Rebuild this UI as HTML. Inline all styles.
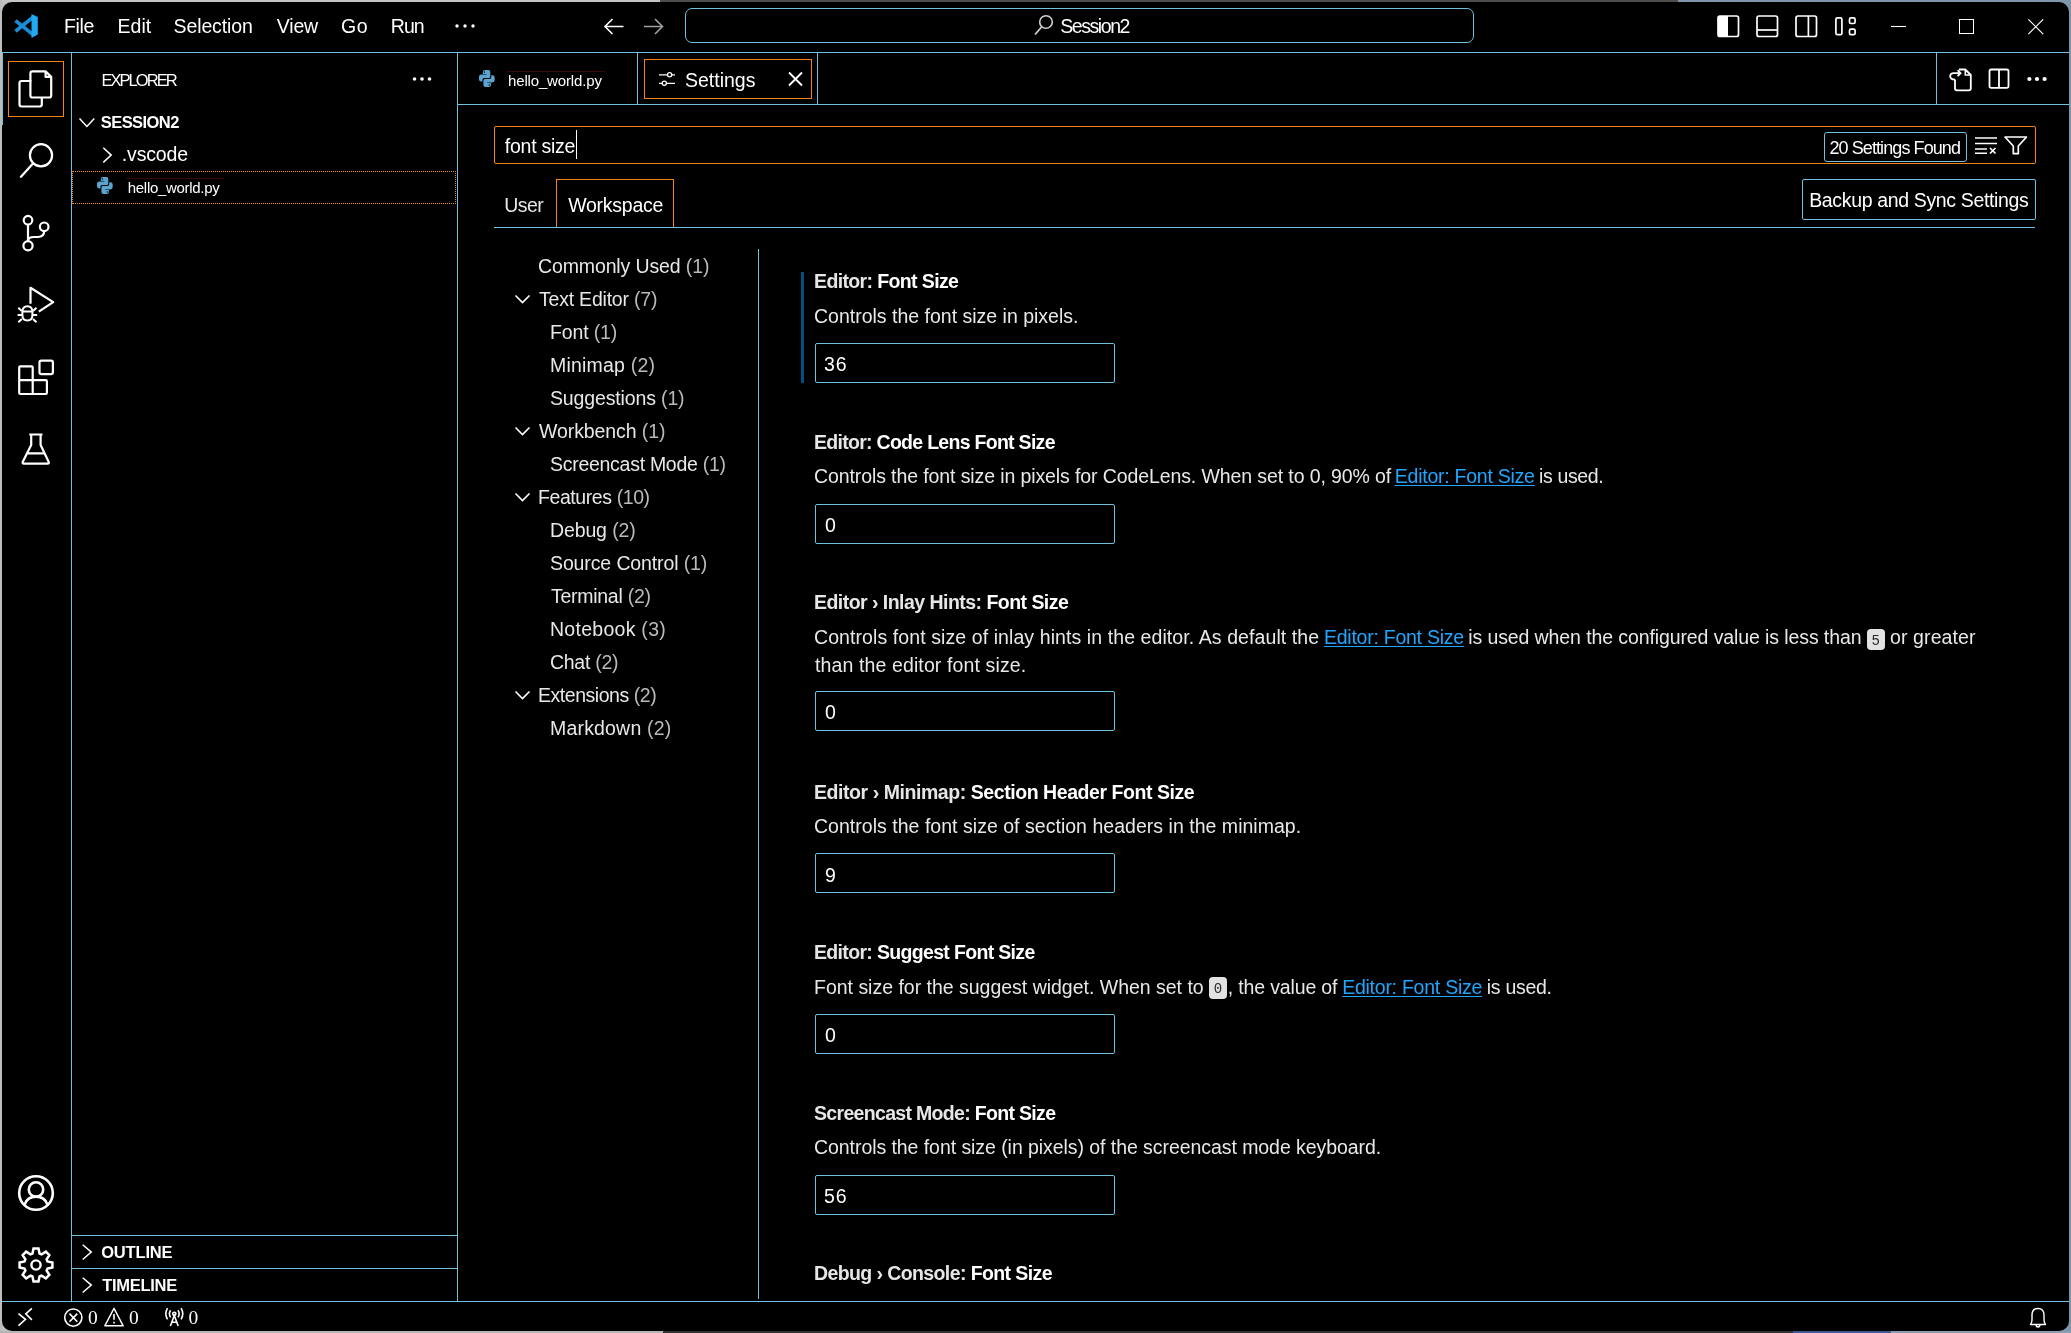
<!DOCTYPE html>
<html><head><meta charset="utf-8"><style>
html,body{margin:0;padding:0;}
body{width:2071px;height:1333px;position:relative;overflow:hidden;background:linear-gradient(90deg,#c0c0c0 0,#c0c0c0 1035px,#7f96ab 1035px);font-family:"Liberation Sans",sans-serif;}
.strip{position:absolute;}
#win{position:absolute;left:2px;top:2px;width:2067px;height:1329px;background:#000;border-radius:10px;overflow:hidden;}
.abs{position:absolute;}
.t{position:absolute;white-space:nowrap;}
.ic{position:absolute;overflow:visible;}
.hl{position:absolute;height:1px;background:#6fc3df;}
.vl{position:absolute;width:1px;background:#6fc3df;}
.lk{color:#21a6ff;text-decoration:underline;text-underline-offset:1.5px;}
.cd{display:inline-block;background:#dcdcdc;color:#111;font-family:"Liberation Mono",monospace;font-size:14.5px;line-height:15px;padding:3px 4px 3px 4px;margin:0 1px;border-radius:4px;position:relative;top:-0.5px;vertical-align:top;}
.cdb{position:absolute;background:#e2e2e2;color:#2a2a2a;font-family:"Liberation Mono",monospace;font-size:14px;line-height:25px;text-align:center;border-radius:4px;overflow:hidden;}
.inp{position:absolute;left:815px;width:298px;height:38px;border:1px solid #6fc3df;border-radius:2px;}
</style></head><body>
<div class="strip" style="left:0;top:0;width:660px;height:2px;background:#c4c4c4"></div>
<div class="strip" style="left:0;top:0;width:2px;height:1333px;background:#bdbdbd"></div>
<div class="strip" style="left:660px;top:0;width:1018px;height:2px;background:#4d4d4d"></div>
<div class="strip" style="left:1678px;top:0;width:393px;height:2px;background:#7f96ab"></div>
<div class="strip" style="left:2069px;top:0;width:2px;height:1333px;background:#7d94a8"></div>
<div class="strip" style="left:0;top:1331px;width:663px;height:2px;background:#b5b5b5"></div>
<div class="strip" style="left:663px;top:1331px;width:1130px;height:2px;background:#333"></div>
<div class="strip" style="left:1793px;top:1331px;width:98px;height:2px;background:#3a5a90"></div>
<div class="strip" style="left:1891px;top:1331px;width:180px;height:2px;background:#8a9cb0"></div>
<div id="win"></div>
<div id="content" style="position:absolute;left:0;top:0;width:2071px;height:1333px;will-change:transform;">

<div class="hl" style="left:2px;top:52px;width:2067px"></div>
<div class="vl" style="left:71px;top:52px;height:1249px"></div>
<div class="vl" style="left:457px;top:52px;height:1249px"></div>
<div class="hl" style="left:457px;top:104px;width:1612px"></div>
<div class="vl" style="left:637px;top:52px;height:52px"></div>
<div class="vl" style="left:817px;top:52px;height:52px"></div>
<div class="vl" style="left:1936px;top:52px;height:52px"></div>
<div class="hl" style="left:2px;top:1301px;width:2067px"></div>
<div class="hl" style="left:72px;top:1235px;width:385px"></div>
<div class="hl" style="left:72px;top:1268px;width:385px"></div>
<div class="hl" style="left:494px;top:227px;width:1541px"></div>
<div class="vl" style="left:758px;top:249px;height:1050px"></div>
<div class="abs" style="left:2px;top:52px;width:1px;height:73px;background:#6fc3df"></div>
<div class="abs" style="left:8px;top:61px;width:54px;height:54px;border:1px solid #f38518"></div>
<div class="abs" style="left:72px;top:171px;width:382px;height:31px;border:1px dotted #f38518"></div>
<div class="abs" style="left:644px;top:59px;width:166px;height:38px;border:1px solid #f38518"></div>
<div class="abs" style="left:685px;top:8px;width:787px;height:33px;border:1px solid #6fc3df;border-radius:7px"></div>
<div class="abs" style="left:494px;top:126px;width:1540px;height:36px;border:1px solid #f38518;border-radius:2px"></div>
<div class="abs" style="left:1824px;top:132px;width:141px;height:28px;border:1px solid #6fc3df;border-radius:3px"></div>
<div class="abs" style="left:556px;top:179px;width:116px;height:47px;border:1px solid #f38518;border-bottom:none"></div>
<div class="abs" style="left:1802px;top:179px;width:232px;height:39px;border:1px solid #6fc3df;border-radius:2px"></div>
<div class="abs" style="left:576px;top:130px;width:1px;height:29px;background:#fff"></div>
<div class="abs" style="left:801px;top:272px;width:3px;height:111px;background:#005080"></div>

<div id="t1" class="t" style="left:64.0px;top:17.39px;font-size:19.50px;line-height:19.50px;font-weight:400;color:#fff;font-family:'Liberation Sans',sans-serif;letter-spacing:-0.333px;">File</div>
<div id="t2" class="t" style="left:117.6px;top:17.39px;font-size:19.50px;line-height:19.50px;font-weight:400;color:#fff;font-family:'Liberation Sans',sans-serif;letter-spacing:-0.001px;">Edit</div>
<div id="t3" class="t" style="left:173.6px;top:17.39px;font-size:19.50px;line-height:19.50px;font-weight:400;color:#fff;font-family:'Liberation Sans',sans-serif;letter-spacing:-0.125px;">Selection</div>
<div id="t4" class="t" style="left:276.8px;top:17.39px;font-size:19.50px;line-height:19.50px;font-weight:400;color:#fff;font-family:'Liberation Sans',sans-serif;letter-spacing:-0.168px;">View</div>
<div id="t5" class="t" style="left:341.0px;top:17.39px;font-size:19.50px;line-height:19.50px;font-weight:400;color:#fff;font-family:'Liberation Sans',sans-serif;letter-spacing:0.500px;">Go</div>
<div id="t6" class="t" style="left:390.8px;top:17.39px;font-size:19.50px;line-height:19.50px;font-weight:400;color:#fff;font-family:'Liberation Sans',sans-serif;letter-spacing:-1.000px;">Run</div>
<div id="t7" class="t" style="left:1060.2px;top:16.59px;font-size:19.50px;line-height:19.50px;font-weight:400;color:#fff;font-family:'Liberation Sans',sans-serif;letter-spacing:-1.429px;">Session2</div>
<div id="t8" class="t" style="left:101.4px;top:71.83px;font-size:16.50px;line-height:16.50px;font-weight:400;color:#fff;font-family:'Liberation Sans',sans-serif;letter-spacing:-1.928px;">EXPLORER</div>
<div id="t9" class="t" style="left:100.8px;top:113.73px;font-size:16.50px;line-height:16.50px;font-weight:700;color:#fff;font-family:'Liberation Sans',sans-serif;letter-spacing:-0.570px;">SESSION2</div>
<div id="t10" class="t" style="left:121.8px;top:145.09px;font-size:19.50px;line-height:19.50px;font-weight:400;color:#fff;font-family:'Liberation Sans',sans-serif;letter-spacing:-0.166px;">.vscode</div>
<div id="t11" class="t" style="left:127.8px;top:180.00px;font-size:15.00px;line-height:15.00px;font-weight:400;color:#fff;font-family:'Liberation Sans',sans-serif;letter-spacing:-0.309px;">hello_world.py</div>
<div id="t12" class="t" style="left:101.2px;top:1244.43px;font-size:16.50px;line-height:16.50px;font-weight:700;color:#fff;font-family:'Liberation Sans',sans-serif;letter-spacing:-0.166px;">OUTLINE</div>
<div id="t13" class="t" style="left:102.2px;top:1276.93px;font-size:16.50px;line-height:16.50px;font-weight:700;color:#fff;font-family:'Liberation Sans',sans-serif;letter-spacing:-0.286px;">TIMELINE</div>
<div id="t14" class="t" style="left:508.0px;top:72.70px;font-size:15.00px;line-height:15.00px;font-weight:400;color:#fff;font-family:'Liberation Sans',sans-serif;letter-spacing:-0.153px;">hello_world.py</div>
<div id="t15" class="t" style="left:685.0px;top:71.09px;font-size:19.50px;line-height:19.50px;font-weight:400;color:#fff;font-family:'Liberation Sans',sans-serif;letter-spacing:0.001px;">Settings</div>
<div id="t16" class="t" style="left:504.8px;top:136.69px;font-size:19.50px;line-height:19.50px;font-weight:400;color:#fff;font-family:'Liberation Sans',sans-serif;letter-spacing:-0.250px;">font size</div>
<div id="t17" class="t" style="left:1829.4px;top:139.46px;font-size:18.00px;line-height:18.00px;font-weight:400;color:#fff;font-family:'Liberation Sans',sans-serif;letter-spacing:-0.907px;">20 Settings Found</div>
<div id="t18" class="t" style="left:504.2px;top:195.79px;font-size:19.50px;line-height:19.50px;font-weight:400;color:#e6e6e6;font-family:'Liberation Sans',sans-serif;letter-spacing:-0.501px;">User</div>
<div id="t19" class="t" style="left:568.2px;top:195.79px;font-size:19.50px;line-height:19.50px;font-weight:400;color:#fff;font-family:'Liberation Sans',sans-serif;letter-spacing:-0.250px;">Workspace</div>
<div id="t20" class="t" style="left:1809.2px;top:191.29px;font-size:19.50px;line-height:19.50px;font-weight:400;color:#fff;font-family:'Liberation Sans',sans-serif;letter-spacing:-0.348px;">Backup and Sync Settings</div>
<div id="t21" class="t" style="left:538.0px;top:257.19px;font-size:19.50px;line-height:19.50px;font-weight:400;color:#e8e8e8;font-family:'Liberation Sans',sans-serif;letter-spacing:-0.125px;">Commonly Used <span style="color:#bababa">(1)</span></div>
<div id="t22" class="t" style="left:539.0px;top:290.19px;font-size:19.50px;line-height:19.50px;font-weight:400;color:#e8e8e8;font-family:'Liberation Sans',sans-serif;letter-spacing:-0.214px;">Text Editor <span style="color:#bababa">(7)</span></div>
<svg class="ic" style="left:514px;top:293px" width="18" height="12" viewBox="0 0 18 12"><path d="M1.5 2.5 L8.5 9.5 L15.5 2.5" fill="none" stroke="#fff" stroke-width="1.6"/></svg>
<div id="t23" class="t" style="left:550.0px;top:323.19px;font-size:19.50px;line-height:19.50px;font-weight:400;color:#e8e8e8;font-family:'Liberation Sans',sans-serif;letter-spacing:-0.143px;">Font <span style="color:#bababa">(1)</span></div>
<div id="t24" class="t" style="left:550.0px;top:356.19px;font-size:19.50px;line-height:19.50px;font-weight:400;color:#e8e8e8;font-family:'Liberation Sans',sans-serif;letter-spacing:0.200px;">Minimap <span style="color:#bababa">(2)</span></div>
<div id="t25" class="t" style="left:550.0px;top:389.19px;font-size:19.50px;line-height:19.50px;font-weight:400;color:#e8e8e8;font-family:'Liberation Sans',sans-serif;letter-spacing:-0.143px;">Suggestions <span style="color:#bababa">(1)</span></div>
<div id="t26" class="t" style="left:539.0px;top:422.19px;font-size:19.50px;line-height:19.50px;font-weight:400;color:#e8e8e8;font-family:'Liberation Sans',sans-serif;letter-spacing:-0.083px;">Workbench <span style="color:#bababa">(1)</span></div>
<svg class="ic" style="left:514px;top:425px" width="18" height="12" viewBox="0 0 18 12"><path d="M1.5 2.5 L8.5 9.5 L15.5 2.5" fill="none" stroke="#fff" stroke-width="1.6"/></svg>
<div id="t27" class="t" style="left:550.0px;top:455.19px;font-size:19.50px;line-height:19.50px;font-weight:400;color:#e8e8e8;font-family:'Liberation Sans',sans-serif;letter-spacing:-0.278px;">Screencast Mode <span style="color:#bababa">(1)</span></div>
<div id="t28" class="t" style="left:538.0px;top:488.19px;font-size:19.50px;line-height:19.50px;font-weight:400;color:#e8e8e8;font-family:'Liberation Sans',sans-serif;letter-spacing:-0.417px;">Features <span style="color:#bababa">(10)</span></div>
<svg class="ic" style="left:514px;top:491px" width="18" height="12" viewBox="0 0 18 12"><path d="M1.5 2.5 L8.5 9.5 L15.5 2.5" fill="none" stroke="#fff" stroke-width="1.6"/></svg>
<div id="t29" class="t" style="left:550.0px;top:521.19px;font-size:19.50px;line-height:19.50px;font-weight:400;color:#e8e8e8;font-family:'Liberation Sans',sans-serif;letter-spacing:-0.125px;">Debug <span style="color:#bababa">(2)</span></div>
<div id="t30" class="t" style="left:550.0px;top:554.19px;font-size:19.50px;line-height:19.50px;font-weight:400;color:#e8e8e8;font-family:'Liberation Sans',sans-serif;letter-spacing:-0.118px;">Source Control <span style="color:#bababa">(1)</span></div>
<div id="t31" class="t" style="left:551.0px;top:587.19px;font-size:19.50px;line-height:19.50px;font-weight:400;color:#e8e8e8;font-family:'Liberation Sans',sans-serif;letter-spacing:-0.273px;">Terminal <span style="color:#bababa">(2)</span></div>
<div id="t32" class="t" style="left:550.0px;top:620.19px;font-size:19.50px;line-height:19.50px;font-weight:400;color:#e8e8e8;font-family:'Liberation Sans',sans-serif;letter-spacing:0.273px;">Notebook <span style="color:#bababa">(3)</span></div>
<div id="t33" class="t" style="left:550.0px;top:653.19px;font-size:19.50px;line-height:19.50px;font-weight:400;color:#e8e8e8;font-family:'Liberation Sans',sans-serif;letter-spacing:-0.286px;">Chat <span style="color:#bababa">(2)</span></div>
<div id="t34" class="t" style="left:538.0px;top:686.19px;font-size:19.50px;line-height:19.50px;font-weight:400;color:#e8e8e8;font-family:'Liberation Sans',sans-serif;letter-spacing:-0.462px;">Extensions <span style="color:#bababa">(2)</span></div>
<svg class="ic" style="left:514px;top:689px" width="18" height="12" viewBox="0 0 18 12"><path d="M1.5 2.5 L8.5 9.5 L15.5 2.5" fill="none" stroke="#fff" stroke-width="1.6"/></svg>
<div id="t35" class="t" style="left:550.0px;top:719.19px;font-size:19.50px;line-height:19.50px;font-weight:400;color:#e8e8e8;font-family:'Liberation Sans',sans-serif;letter-spacing:0.182px;">Markdown <span style="color:#bababa">(2)</span></div>
<div id="t36" class="t" style="left:814.0px;top:272.29px;font-size:19.50px;line-height:19.50px;font-weight:700;color:#fff;font-family:'Liberation Sans',sans-serif;letter-spacing:-0.625px;"><span style="color:#e6e6e6">Editor: </span>Font Size</div>
<div id="t37" class="t" style="left:814.0px;top:306.69px;font-size:19.50px;line-height:19.50px;font-weight:400;color:#e8e8e8;font-family:'Liberation Sans',sans-serif;letter-spacing:0.000px;">Controls the font size in pixels.</div>
<div class="inp" style="top:343.0px"></div>
<div id="t38" class="t" style="left:824.0px;top:355.39px;font-size:19.50px;line-height:19.50px;font-weight:400;color:#fff;font-family:'Liberation Sans',sans-serif;letter-spacing:1.000px;">36</div>
<div id="t39" class="t" style="left:814.0px;top:432.89px;font-size:19.50px;line-height:19.50px;font-weight:700;color:#fff;font-family:'Liberation Sans',sans-serif;letter-spacing:-0.712px;"><span style="color:#e6e6e6">Editor: </span>Code Lens Font Size</div>
<div id="t40" class="t" style="left:814.0px;top:467.29px;font-size:19.50px;line-height:19.50px;font-weight:400;color:#e8e8e8;font-family:'Liberation Sans',sans-serif;letter-spacing:-0.104px;">Controls the font size in pixels for CodeLens. When set to 0, 90% of</div>
<div id="t41" class="t" style="left:1394.8px;top:467.29px;font-size:19.50px;line-height:19.50px;font-weight:400;color:#21a6ff;font-family:'Liberation Sans',sans-serif;letter-spacing:-0.249px;text-decoration:underline;text-underline-offset:1.5px;">Editor: Font Size</div>
<div id="t42" class="t" style="left:1539.0px;top:467.29px;font-size:19.50px;line-height:19.50px;font-weight:400;color:#e8e8e8;font-family:'Liberation Sans',sans-serif;letter-spacing:-0.358px;">is used.</div>
<div class="inp" style="top:503.6px"></div>
<div id="t43" class="t" style="left:825.0px;top:515.99px;font-size:19.50px;line-height:19.50px;font-weight:400;color:#fff;font-family:'Liberation Sans',sans-serif;letter-spacing:0.000px;">0</div>
<div id="t44" class="t" style="left:814.0px;top:593.49px;font-size:19.50px;line-height:19.50px;font-weight:700;color:#fff;font-family:'Liberation Sans',sans-serif;letter-spacing:-0.535px;"><span style="color:#e6e6e6">Editor › Inlay Hints: </span>Font Size</div>
<div id="t45" class="t" style="left:814.0px;top:627.89px;font-size:19.50px;line-height:19.50px;font-weight:400;color:#e8e8e8;font-family:'Liberation Sans',sans-serif;letter-spacing:0.087px;">Controls font size of inlay hints in the editor. As default the</div>
<div id="t46" class="t" style="left:1324.0px;top:627.89px;font-size:19.50px;line-height:19.50px;font-weight:400;color:#21a6ff;font-family:'Liberation Sans',sans-serif;letter-spacing:-0.251px;text-decoration:underline;text-underline-offset:1.5px;">Editor: Font Size</div>
<div id="t47" class="t" style="left:1468.2px;top:627.89px;font-size:19.50px;line-height:19.50px;font-weight:400;color:#e8e8e8;font-family:'Liberation Sans',sans-serif;letter-spacing:-0.100px;">is used when the configured value is less than</div>
<div class="cdb" style="left:1866.8px;top:628.6px;width:18px;height:21.5px">5</div>
<div id="t48" class="t" style="left:1890.0px;top:627.89px;font-size:19.50px;line-height:19.50px;font-weight:400;color:#e8e8e8;font-family:'Liberation Sans',sans-serif;letter-spacing:0.111px;">or greater</div>
<div id="t49" class="t" style="left:815.0px;top:656.39px;font-size:19.50px;line-height:19.50px;font-weight:400;color:#e8e8e8;font-family:'Liberation Sans',sans-serif;letter-spacing:0.120px;">than the editor font size.</div>
<div class="inp" style="top:690.7px"></div>
<div id="t50" class="t" style="left:825.0px;top:703.09px;font-size:19.50px;line-height:19.50px;font-weight:400;color:#fff;font-family:'Liberation Sans',sans-serif;letter-spacing:0.000px;">0</div>
<div id="t51" class="t" style="left:814.0px;top:782.59px;font-size:19.50px;line-height:19.50px;font-weight:700;color:#fff;font-family:'Liberation Sans',sans-serif;letter-spacing:-0.439px;"><span style="color:#e6e6e6">Editor › Minimap: </span>Section Header Font Size</div>
<div id="t52" class="t" style="left:814.0px;top:816.99px;font-size:19.50px;line-height:19.50px;font-weight:400;color:#e8e8e8;font-family:'Liberation Sans',sans-serif;letter-spacing:0.028px;">Controls the font size of section headers in the minimap.</div>
<div class="inp" style="top:853.3px"></div>
<div id="t53" class="t" style="left:825.0px;top:865.69px;font-size:19.50px;line-height:19.50px;font-weight:400;color:#fff;font-family:'Liberation Sans',sans-serif;letter-spacing:0.000px;">9</div>
<div id="t54" class="t" style="left:814.0px;top:943.19px;font-size:19.50px;line-height:19.50px;font-weight:700;color:#fff;font-family:'Liberation Sans',sans-serif;letter-spacing:-0.667px;"><span style="color:#e6e6e6">Editor: </span>Suggest Font Size</div>
<div id="t55" class="t" style="left:814.0px;top:977.59px;font-size:19.50px;line-height:19.50px;font-weight:400;color:#e8e8e8;font-family:'Liberation Sans',sans-serif;letter-spacing:-0.012px;">Font size for the suggest widget. When set to</div>
<div class="cdb" style="left:1209.2px;top:977.3px;width:17.5px;height:21.5px">0</div>
<div id="t56" class="t" style="left:1227.8px;top:977.59px;font-size:19.50px;line-height:19.50px;font-weight:400;color:#e8e8e8;font-family:'Liberation Sans',sans-serif;letter-spacing:-0.154px;">, the value of</div>
<div id="t57" class="t" style="left:1342.2px;top:977.59px;font-size:19.50px;line-height:19.50px;font-weight:400;color:#21a6ff;font-family:'Liberation Sans',sans-serif;letter-spacing:-0.251px;text-decoration:underline;text-underline-offset:1.5px;">Editor: Font Size</div>
<div id="t58" class="t" style="left:1486.8px;top:977.59px;font-size:19.50px;line-height:19.50px;font-weight:400;color:#e8e8e8;font-family:'Liberation Sans',sans-serif;letter-spacing:-0.285px;">is used.</div>
<div class="inp" style="top:1013.9px"></div>
<div id="t59" class="t" style="left:825.0px;top:1026.29px;font-size:19.50px;line-height:19.50px;font-weight:400;color:#fff;font-family:'Liberation Sans',sans-serif;letter-spacing:0.000px;">0</div>
<div id="t60" class="t" style="left:814.0px;top:1103.79px;font-size:19.50px;line-height:19.50px;font-weight:700;color:#fff;font-family:'Liberation Sans',sans-serif;letter-spacing:-0.680px;"><span style="color:#e6e6e6">Screencast Mode: </span>Font Size</div>
<div id="t61" class="t" style="left:814.0px;top:1138.19px;font-size:19.50px;line-height:19.50px;font-weight:400;color:#e8e8e8;font-family:'Liberation Sans',sans-serif;letter-spacing:-0.061px;">Controls the font size (in pixels) of the screencast mode keyboard.</div>
<div class="inp" style="top:1174.5px"></div>
<div id="t62" class="t" style="left:824.0px;top:1186.89px;font-size:19.50px;line-height:19.50px;font-weight:400;color:#fff;font-family:'Liberation Sans',sans-serif;letter-spacing:1.000px;">56</div>
<div id="t63" class="t" style="left:814.0px;top:1264.39px;font-size:19.50px;line-height:19.50px;font-weight:700;color:#fff;font-family:'Liberation Sans',sans-serif;letter-spacing:-0.600px;"><span style="color:#e6e6e6">Debug › Console: </span>Font Size</div>
<div id="t64" class="t" style="left:88.0px;top:1307.89px;font-size:19.50px;line-height:19.50px;font-weight:400;color:#fff;font-family:'Liberation Serif',sans-serif;letter-spacing:0.000px;">0</div>
<div id="t65" class="t" style="left:129.0px;top:1307.89px;font-size:19.50px;line-height:19.50px;font-weight:400;color:#fff;font-family:'Liberation Serif',sans-serif;letter-spacing:0.000px;">0</div>
<div id="t66" class="t" style="left:188.4px;top:1307.89px;font-size:19.50px;line-height:19.50px;font-weight:400;color:#fff;font-family:'Liberation Serif',sans-serif;letter-spacing:0.000px;">0</div>
<svg class="ic" style="left:12px;top:12px" width="28" height="28" viewBox="0 0 28 28" >
<path d="M22 4.4 L3.5 19.2" stroke="#1b8cd8" stroke-width="3.7"/>
<path d="M22 23.4 L3.5 8.6" stroke="#1b8cd8" stroke-width="3.7"/>
<path d="M19.5 2 L25.8 5.1 L25.8 22.4 L19.5 26 Z" fill="#23a9f3"/>
</svg>
<svg class="ic" style="left:452px;top:20px" width="26" height="12" viewBox="0 0 26 12" ><circle cx="5" cy="6" r="1.7" fill="#fff"/><circle cx="13" cy="6" r="1.7" fill="#fff"/><circle cx="21" cy="6" r="1.7" fill="#fff"/></svg>
<svg class="ic" style="left:600px;top:14px" width="28" height="26" viewBox="0 0 28 26" ><path d="M23.5 12.5 H6 M12.5 5 L5 12.5 L12.5 20" fill="none" stroke="#fff" stroke-width="1.6"/></svg>
<svg class="ic" style="left:640px;top:14px" width="28" height="26" viewBox="0 0 28 26" ><path d="M4 12.5 H21.5 M15 5 L22.5 12.5 L15 20" fill="none" stroke="#a0a0a0" stroke-width="1.6"/></svg>
<svg class="ic" style="left:1030px;top:12px" width="28" height="28" viewBox="0 0 28 28" ><circle cx="16" cy="10" r="6.3" fill="none" stroke="#d0d0d0" stroke-width="1.6"/><path d="M11.6 15 L5 22.5" stroke="#d0d0d0" stroke-width="1.8" fill="none"/></svg>
<svg class="ic" style="left:1714px;top:12px" width="28" height="28" viewBox="0 0 28 28" ><rect x="4" y="4" width="20.5" height="20.5" rx="2" fill="none" stroke="#fff" stroke-width="1.7"/><rect x="4" y="4" width="10" height="20.5" fill="#fff"/></svg>
<svg class="ic" style="left:1753px;top:12px" width="28" height="28" viewBox="0 0 28 28" ><rect x="4" y="4" width="20.5" height="20.5" rx="2" fill="none" stroke="#fff" stroke-width="1.7"/><path d="M4 18 H24.5" stroke="#fff" stroke-width="1.7"/></svg>
<svg class="ic" style="left:1792px;top:12px" width="28" height="28" viewBox="0 0 28 28" ><rect x="4" y="4" width="20.5" height="20.5" rx="2" fill="none" stroke="#fff" stroke-width="1.7"/><path d="M16.4 4 V24.5" stroke="#fff" stroke-width="1.7"/></svg>
<svg class="ic" style="left:1832px;top:12px" width="28" height="28" viewBox="0 0 28 28" ><rect x="3.9" y="5.9" width="6" height="16.8" rx="1.5" fill="none" stroke="#fff" stroke-width="1.7"/><rect x="17.5" y="5.9" width="5.6" height="5.6" rx="1.5" fill="none" stroke="#fff" stroke-width="1.7"/><rect x="17.5" y="17.1" width="5.6" height="5.6" rx="1.5" fill="none" stroke="#fff" stroke-width="1.7"/></svg>
<svg class="ic" style="left:1888px;top:20px" width="22" height="14" viewBox="0 0 22 14" ><path d="M3 6.5 H18" stroke="#fff" stroke-width="1.1"/></svg>
<svg class="ic" style="left:1955px;top:15px" width="24" height="24" viewBox="0 0 24 24" ><rect x="4.5" y="4.5" width="14" height="14" fill="none" stroke="#fff" stroke-width="1"/></svg>
<svg class="ic" style="left:2024px;top:15px" width="24" height="24" viewBox="0 0 24 24" ><path d="M4.3 4.3 L19.2 19.2 M19.2 4.3 L4.3 19.2" stroke="#fff" stroke-width="1.2"/></svg>
<svg class="ic" style="left:16px;top:68px" width="40" height="42" viewBox="0 0 40 42" ><path d="M15.4 13 H5.5 Q3.5 13 3.5 15 V36.6 Q3.5 38.5 5.5 38.5 H23.8 Q25.8 38.5 25.8 36.6 V29.5" fill="none" stroke="#fff" stroke-width="2.2" stroke-linejoin="round"/>
<path d="M14.4 5.3 Q14.4 3.3 16.4 3.3 H29.6 L35.2 8.9 V27.5 Q35.2 29.5 33.2 29.5 H16.4 Q14.4 29.5 14.4 27.5 Z M29.6 3.3 V8.9 H35.2" fill="none" stroke="#fff" stroke-width="2.2" stroke-linejoin="round"/></svg>
<svg class="ic" style="left:16px;top:140px" width="42" height="42" viewBox="0 0 42 42" ><circle cx="25" cy="15.3" r="11.1" fill="none" stroke="#fff" stroke-width="2.2" stroke-linejoin="round"/><path d="M17 23.5 L4.3 37.5" fill="none" stroke="#fff" stroke-width="2.2" stroke-linejoin="round"/></svg>
<svg class="ic" style="left:16px;top:212px" width="40" height="42" viewBox="0 0 40 42" ><circle cx="12" cy="8.2" r="4.3" fill="none" stroke="#fff" stroke-width="2.2" stroke-linejoin="round"/><circle cx="12" cy="33.7" r="4.6" fill="none" stroke="#fff" stroke-width="2.2" stroke-linejoin="round"/><circle cx="28.2" cy="14.8" r="4.3" fill="none" stroke="#fff" stroke-width="2.2" stroke-linejoin="round"/><path d="M12 12.5 V29.1 M28.2 19.1 Q28.2 25 22 25 H18 Q12 25 12 29.1" fill="none" stroke="#fff" stroke-width="2.2" stroke-linejoin="round"/></svg>
<svg class="ic" style="left:14px;top:284px" width="44" height="42" viewBox="0 0 44 42" ><path d="M16.5 19.8 V3.8 L39.2 18.1 L24.8 27.6" fill="none" stroke="#fff" stroke-width="2.2" stroke-linejoin="round"/>
<path d="M8.4 28 Q8.4 22.2 13.4 22.2 Q18.4 22.2 18.4 28 V31 Q18.4 36.5 13.4 36.5 Q8.4 36.5 8.4 31 Z M8.4 27.4 H18.4" fill="none" stroke="#fff" stroke-width="2"/>
<path d="M4.3 23.8 L7.8 27 M22.5 23.8 L19 27 M3.6 31 H8 M18.8 31 H23.2 M4.3 38.2 L7.8 35 M22.5 38.2 L19 35" fill="none" stroke="#fff" stroke-width="2"/></svg>
<svg class="ic" style="left:14px;top:356px" width="44" height="42" viewBox="0 0 44 42" ><path d="M5.2 11.4 Q5.2 10.3 6.3 10.3 H17.6 Q18.7 10.3 18.7 11.4 V24.2 H31.8 Q32.9 24.2 32.9 25.3 V36.8 Q32.9 38 31.8 38 H6.3 Q5.2 38 5.2 36.8 Z M5.2 24.2 H18.7 V38" fill="none" stroke="#fff" stroke-width="2.2" stroke-linejoin="round"/>
<rect x="25.5" y="4.7" width="13.4" height="13.4" rx="1.8" fill="none" stroke="#fff" stroke-width="2.2" stroke-linejoin="round"/></svg>
<svg class="ic" style="left:16px;top:430px" width="40" height="40" viewBox="0 0 40 40" ><path d="M13.3 4.5 H26.5 M15.2 4.5 V15 L6.8 31.8 Q6 33.6 8 33.6 H31.5 Q33.5 33.6 32.6 31.8 L24.6 15 V4.5 M11 23.4 H28.8" fill="none" stroke="#fff" stroke-width="2.2" stroke-linejoin="round"/></svg>
<svg class="ic" style="left:14px;top:1171px" width="44" height="44" viewBox="0 0 44 44" ><circle cx="22" cy="22" r="16.8" fill="none" stroke="#fff" stroke-width="2.6"/><circle cx="22" cy="18.5" r="7.2" fill="none" stroke="#fff" stroke-width="2.6"/><path d="M10.6 33.6 Q13.2 25.6 22 25.6 Q30.8 25.6 33.4 33.6" fill="none" stroke="#fff" stroke-width="2.6"/></svg>
<svg class="ic" style="left:14px;top:1243px" width="44" height="44" viewBox="0 0 44 44" ><polygon points="38.41,19.52 38.41,24.48 33.46,25.55 32.61,27.60 35.36,31.85 31.85,35.36 27.60,32.61 25.55,33.46 24.48,38.41 19.52,38.41 18.45,33.46 16.40,32.61 12.15,35.36 8.64,31.85 11.39,27.60 10.54,25.55 5.59,24.48 5.59,19.52 10.54,18.45 11.39,16.40 8.64,12.15 12.15,8.64 16.40,11.39 18.45,10.54 19.52,5.59 24.48,5.59 25.55,10.54 27.60,11.39 31.85,8.64 35.36,12.15 32.61,16.40 33.46,18.45" fill="none" stroke="#fff" stroke-width="2.5" stroke-linejoin="miter"/><circle cx="22" cy="22" r="4.6" fill="none" stroke="#fff" stroke-width="2.4"/></svg>
<svg class="ic" style="left:408px;top:72px" width="28" height="14" viewBox="0 0 28 14" ><circle cx="6.5" cy="7" r="1.8" fill="#fff"/><circle cx="14" cy="7" r="1.8" fill="#fff"/><circle cx="21.5" cy="7" r="1.8" fill="#fff"/></svg>
<svg class="ic" style="left:76px;top:114px" width="22" height="18" viewBox="0 0 22 18" ><path d="M3.5 4.5 L10.9 12.5 L18.3 4.5" fill="none" stroke="#fff" stroke-width="1.5"/></svg>
<svg class="ic" style="left:98px;top:144px" width="18" height="22" viewBox="0 0 18 22" ><path d="M5.3 3.8 L13.2 11.1 L5.3 18.4" fill="none" stroke="#fff" stroke-width="1.5"/></svg>
<svg class="ic" style="left:78px;top:1240px" width="18" height="24" viewBox="0 0 18 24" ><path d="M4.7 4.7 L13.3 12.1 L4.7 19.5" fill="none" stroke="#fff" stroke-width="1.5"/></svg>
<svg class="ic" style="left:78px;top:1273px" width="18" height="24" viewBox="0 0 18 24" ><path d="M4.7 4.7 L13.3 12.1 L4.7 19.5" fill="none" stroke="#fff" stroke-width="1.5"/></svg>
<svg class="ic" style="left:96.5px;top:177px" width="16" height="17" viewBox="0 0 16 17" ><path d="M3.8 2 Q3.8 0 5.8 0 H9.3 Q11.3 0 11.3 2 V6.4 Q11.3 8 9.7 8 H5.4 Q3.4 8 3.4 10 V11.6 H2.2 Q0 11.6 0 9.2 V6.8 Q0 4.4 2.4 4.4 H7.5 V3.9 H3.8 Z" fill="#5ba4cf"/>
<path d="M11.9 14.9 Q11.9 16.9 9.9 16.9 H6.4 Q4.4 16.9 4.4 14.9 V10.5 Q4.4 8.9 6 8.9 H10.3 Q12.3 8.9 12.3 6.9 V5.3 H13.5 Q15.7 5.3 15.7 7.7 V10.1 Q15.7 12.5 13.3 12.5 H8.2 V13 H11.9 Z" fill="#5ba4cf"/>
<circle cx="5.4" cy="1.9" r="0.75" fill="#000"/><circle cx="10.3" cy="15" r="0.75" fill="#000"/></svg>
<svg class="ic" style="left:479.2px;top:70px" width="16" height="17" viewBox="0 0 16 17" ><path d="M3.8 2 Q3.8 0 5.8 0 H9.3 Q11.3 0 11.3 2 V6.4 Q11.3 8 9.7 8 H5.4 Q3.4 8 3.4 10 V11.6 H2.2 Q0 11.6 0 9.2 V6.8 Q0 4.4 2.4 4.4 H7.5 V3.9 H3.8 Z" fill="#5ba4cf"/>
<path d="M11.9 14.9 Q11.9 16.9 9.9 16.9 H6.4 Q4.4 16.9 4.4 14.9 V10.5 Q4.4 8.9 6 8.9 H10.3 Q12.3 8.9 12.3 6.9 V5.3 H13.5 Q15.7 5.3 15.7 7.7 V10.1 Q15.7 12.5 13.3 12.5 H8.2 V13 H11.9 Z" fill="#5ba4cf"/>
<circle cx="5.4" cy="1.9" r="0.75" fill="#000"/><circle cx="10.3" cy="15" r="0.75" fill="#000"/></svg>
<div class="abs" style="left:126px;top:178px;width:98px;height:1px;background:#3a0a0a"></div>
<div class="abs" style="left:507px;top:71px;width:98px;height:1px;background:#3a0a0a"></div>
<svg class="ic" style="left:656px;top:68px" width="22" height="22" viewBox="0 0 22 22" ><path d="M3 6.8 H11.5 M15.7 6.8 H19 M3 15.3 H6.2 M10.4 15.3 H19" stroke="#fff" stroke-width="1.3"/><circle cx="13.6" cy="6.8" r="2.1" fill="none" stroke="#fff" stroke-width="1.3"/><circle cx="8.3" cy="15.3" r="2.1" fill="none" stroke="#fff" stroke-width="1.3"/></svg>
<svg class="ic" style="left:784px;top:68px" width="24" height="22" viewBox="0 0 24 22" ><path d="M5 4.5 L18 17.5 M18 4.5 L5 17.5" stroke="#fff" stroke-width="1.9"/></svg>
<svg class="ic" style="left:1944px;top:65px" width="32" height="30" viewBox="0 0 32 30" ><path d="M15 4.5 H21.3 L26.8 10 V23.3 Q26.8 25.3 24.8 25.3 H13 Q11 25.3 11 23.3 V14.5" fill="none" stroke="#fff" stroke-width="1.8" stroke-linejoin="round"/>
<path d="M21.3 4.5 V10 H26.8" fill="none" stroke="#fff" stroke-width="1.6"/>
<path d="M10.8 14.5 Q6.2 14.5 6.2 11.3 Q6.2 8.2 10 8.2 H16.5 M13.6 5.2 L16.6 8.2 L13.6 11.2" fill="none" stroke="#fff" stroke-width="1.8"/></svg>
<svg class="ic" style="left:1985px;top:65px" width="28" height="28" viewBox="0 0 28 28" ><rect x="4.5" y="4.5" width="19" height="18.3" rx="1.8" fill="none" stroke="#fff" stroke-width="1.8"/><path d="M14 4.5 V22.8" stroke="#fff" stroke-width="1.8"/></svg>
<svg class="ic" style="left:2023px;top:72px" width="28" height="14" viewBox="0 0 28 14" ><circle cx="6.4" cy="7" r="2.1" fill="#fff"/><circle cx="14" cy="7" r="2.1" fill="#fff"/><circle cx="21.6" cy="7" r="2.1" fill="#fff"/></svg>
<svg class="ic" style="left:1972px;top:132px" width="30" height="26" viewBox="0 0 30 26" ><path d="M3 6 H25 M3 11.5 H25 M3 17 H15 M3 21.3 H15" stroke="#fff" stroke-width="1.6"/><path d="M18 16 L23.5 21.5 M23.5 16 L18 21.5" stroke="#fff" stroke-width="1.7"/></svg>
<svg class="ic" style="left:2001px;top:132px" width="30" height="26" viewBox="0 0 30 26" ><path d="M4 5 H25.5 L17.3 14 V21.7 H12.3 V14 Z" fill="none" stroke="#fff" stroke-width="1.7" stroke-linejoin="round"/></svg>
<svg class="ic" style="left:14px;top:1304px" width="22" height="26" viewBox="0 0 22 26" ><path d="M4.5 9.6 L11.5 15.4 L4.5 21.7 M17.9 4.3 L11.8 9.8 L17.9 15.9" fill="none" stroke="#fff" stroke-width="1.6"/></svg>
<svg class="ic" style="left:62px;top:1306px" width="24" height="24" viewBox="0 0 24 24" ><circle cx="11.3" cy="11.6" r="8.6" fill="none" stroke="#fff" stroke-width="1.6"/><path d="M7.5 7.6 L15.3 15.7 M15.3 7.6 L7.5 15.7" fill="none" stroke="#fff" stroke-width="1.6"/></svg>
<svg class="ic" style="left:102px;top:1305px" width="24" height="24" viewBox="0 0 24 24" ><path d="M12 3.3 L21.2 20.8 H2.8 Z" fill="none" stroke="#fff" stroke-width="1.4" stroke-linejoin="round"/><path d="M12 9 V14.8 M12 16.8 V18.5" stroke="#fff" stroke-width="1.6"/></svg>
<svg class="ic" style="left:162px;top:1305px" width="26" height="24" viewBox="0 0 26 24" ><circle cx="12.3" cy="8.8" r="1.6" fill="none" stroke="#fff" stroke-width="1.6"/><path d="M8.4 21 L12.3 10.5 L16.2 21 M9.7 17.3 H14.9" fill="none" stroke="#fff" stroke-width="1.6"/>
<path d="M8.6 5.2 Q6.3 8.8 8.6 12.4 M16 5.2 Q18.3 8.8 16 12.4 M5.5 3.2 Q2.2 8.8 5.5 14.4 M19.1 3.2 Q22.4 8.8 19.1 14.4" fill="none" stroke="#fff" stroke-width="1.6"/></svg>
<svg class="ic" style="left:2026px;top:1304px" width="24" height="26" viewBox="0 0 24 26" ><path d="M4.5 20.5 H19.5 L18.5 18.5 Q18 17.5 18 15 V11 Q18 4.5 12 4.5 Q6 4.5 6 11 V15 Q6 17.5 5.5 18.5 Z" fill="none" stroke="#fff" stroke-width="1.4" stroke-linejoin="round"/><path d="M10.2 20.8 Q10.2 23 12 23 Q13.8 23 13.8 20.8" fill="none" stroke="#fff" stroke-width="1.6"/></svg>
</div>
</body></html>
